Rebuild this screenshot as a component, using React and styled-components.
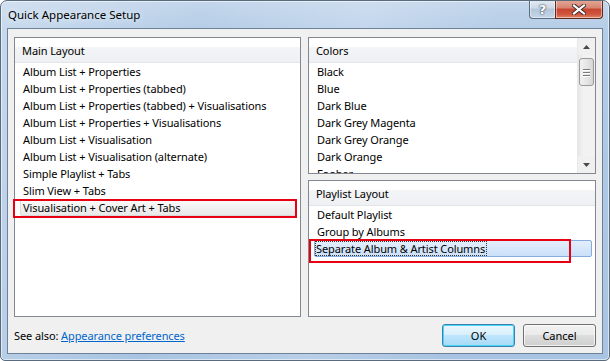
import React from 'react'
import styled, { createGlobalStyle } from 'styled-components'

const Global = createGlobalStyle`
  html, body { margin: 0; padding: 0; background: #fff; }
  body { width: 610px; height: 361px; overflow: hidden; font-family: "Noto Sans", "DejaVu Sans", sans-serif; font-size: 11px; letter-spacing: -0.1px; color: #000; }
`

const mainLayouts = [
  'Album List + Properties',
  'Album List + Properties (tabbed)',
  'Album List + Properties (tabbed) + Visualisations',
  'Album List + Properties + Visualisations',
  'Album List + Visualisation',
  'Album List + Visualisation (alternate)',
  'Simple Playlist + Tabs',
  'Slim View + Tabs',
  'Visualisation + Cover Art + Tabs',
]

const colours = ['Black', 'Blue', 'Dark Blue', 'Dark Grey Magenta', 'Dark Grey Orange', 'Dark Orange', 'Foobar']

const playlistLayouts = ['Default Playlist', 'Group by Albums', 'Separate Album & Artist Columns']

export default function App() {
  return (
    <>
      <Global />
      <Window>
        <TitleBar>
          <Title>Quick Appearance Setup</Title>
          <Captions>
            <HelpButton>?</HelpButton>
            <CloseButton>
              <svg width="14" height="11" viewBox="0 0 14 11">
                <path d="M2 1.5 L12 9.5 M12 1.5 L2 9.5" stroke="#3a2a28" strokeWidth="4" strokeLinecap="square" />
                <path d="M2 1.5 L12 9.5 M12 1.5 L2 9.5" stroke="#fff" strokeWidth="2.2" strokeLinecap="square" />
              </svg>
            </CloseButton>
          </Captions>
        </TitleBar>

        <Client>
          <Panels>
            <Panel>
              <Header>Main Layout</Header>
              <Items>
                {mainLayouts.map((t, i) => (
                  <Item key={t} selected={i === 8 ? 'inactive' : ''}>
                    {t}
                    {i === 8 && <Marker left={-8} top={-1} width={284} height={19} />}
                  </Item>
                ))}
              </Items>
            </Panel>

            <RightColumn>
              <Panel clip>
                <ScrollArea>
                  <ListBody>
                    <Header>Colors</Header>
                    <Items>
                      {colours.map(t => <Item key={t}>{t}</Item>)}
                    </Items>
                  </ListBody>
                  <ScrollBar>
                    <Arrow>
                      <svg width="7" height="4" viewBox="0 0 7 4"><path d="M0 4 L3.5 0 L7 4Z" fill="#4a4a4a" /></svg>
                    </Arrow>
                    <Track>
                      <Thumb>
                        <Grip /><Grip /><Grip />
                      </Thumb>
                    </Track>
                    <Arrow>
                      <svg width="7" height="4" viewBox="0 0 7 4"><path d="M0 0 L3.5 4 L7 0Z" fill="#4a4a4a" /></svg>
                    </Arrow>
                  </ScrollBar>
                </ScrollArea>
              </Panel>

              <Panel>
                <Header>Playlist Layout</Header>
                <Items>
                  {playlistLayouts.map((t, i) => (
                    <Item key={t} selected={i === 2 ? 'active' : ''}>
                      {i === 2 ? <Focus>{t}</Focus> : t}
                      {i === 2 && <Marker left={-6} top={-2} width={262} height={24} />}
                    </Item>
                  ))}
                </Items>
              </Panel>
            </RightColumn>
          </Panels>

          <Footer>
            <SeeAlso>
              See also: <Link href="#">Appearance preferences</Link>
            </SeeAlso>
            <Buttons>
              <Button primary>OK</Button>
              <Button>Cancel</Button>
            </Buttons>
          </Footer>
        </Client>
      </Window>
    </>
  )
}

const Window = styled.div`
  box-sizing: border-box;
  width: 610px;
  height: 361px;
  border: 1px solid #5a6b7e;
  border-radius: 7px 7px 5px 5px;
  background:
    linear-gradient(100deg, rgba(255,255,255,0.25) 0%, rgba(255,255,255,0) 30%, rgba(255,255,255,0.18) 55%, rgba(255,255,255,0) 75%),
    linear-gradient(180deg, #c3d6eb 0%, #b2cbe6 10%, #a9c4e2 100%);
  box-shadow: inset 0 0 0 1px rgba(255,255,255,0.55);
  display: flex;
  flex-direction: column;
  overflow: hidden;
`

const TitleBar = styled.div`
  height: 27px;
  display: flex;
  align-items: flex-start;
  justify-content: space-between;
  padding-left: 7px;
`

const Title = styled.div`
  margin-top: 6px;
  font-size: 11.5px;
  letter-spacing: 0;
  color: #000;
  text-shadow: 0 0 6px rgba(255,255,255,0.9);
`

const Captions = styled.div`
  display: flex;
  margin-right: 6px;
  margin-top: -1px;
`

const CaptionBase = styled.div`
  height: 19px;
  box-sizing: border-box;
  border: 1px solid #5c6d80;
  border-top: none;
  display: flex;
  align-items: center;
  justify-content: center;
  box-shadow: inset 0 0 0 1px rgba(255,255,255,0.45);
`

const HelpButton = styled(CaptionBase)`
  width: 26px;
  border-right: none;
  border-radius: 0 0 0 4px;
  background: linear-gradient(180deg, #e3ebf4 0%, #cdd9e7 45%, #b4c6da 50%, #c6d6e8 100%);
  font-family: "DejaVu Sans", sans-serif;
  font-weight: bold;
  font-size: 13px;
  color: #fff;
  text-shadow: 0 0 1px #2a3a4a, 0 0 2px #2a3a4a;
`

const CloseButton = styled(CaptionBase)`
  width: 48px;
  border-color: #5d2a22;
  border-radius: 0 0 4px 0;
  background: linear-gradient(180deg, #e6a898 0%, #d68370 45%, #c7442f 50%, #d1563f 80%, #e08a68 100%);
`

const Client = styled.div`
  flex: 1;
  margin: 0 6px 6px 6px;
  border: 1px solid #6d8199;
  background: #f0f0f0;
  padding: 8px 6px 6px 6px;
  display: flex;
  flex-direction: column;
`

const Panels = styled.div`
  display: grid;
  grid-template-columns: 287px 288px;
  column-gap: 7px;
  height: 280px;
`

const RightColumn = styled.div`
  display: grid;
  grid-template-rows: 137px 137px;
  row-gap: 6px;
`

const Panel = styled.div`
  box-sizing: border-box;
  border: 1px solid #828790;
  background: #fff;
  overflow: ${p => (p.clip ? 'hidden' : 'visible')};
`

const ScrollArea = styled.div`
  display: flex;
  height: 100%;
`

const ListBody = styled.div`
  flex: 1;
  overflow: hidden;
`

const Header = styled.div`
  height: 24px;
  line-height: 25px;
  padding-left: 7px;
  border-bottom: 1px solid #e3e5e8;
  background: linear-gradient(180deg, #ffffff 0%, #ffffff 35%, #f3f4f6 40%, #eef0f3 100%);
  white-space: nowrap;
`

const Items = styled.div`
  padding-top: 0;
`

const Item = styled.div`
  position: relative;
  box-sizing: border-box;
  height: 17px;
  line-height: 15px;
  margin: 0 3px 0 5px;
  padding-left: 2px;
  border: 1px solid transparent;
  border-radius: 2px;
  white-space: nowrap;
  ${p => p.selected === 'inactive' && `
    border-color: #d9d9d9;
    background: linear-gradient(180deg, #fafafa 0%, #e8e8e8 100%);
  `}
  ${p => p.selected === 'active' && `
    border-color: #84acdd;
    background: linear-gradient(180deg, #e3eefc 0%, #cbe0f9 100%);
  `}
`

const Focus = styled.span`
  display: inline-block;
  margin-left: -2px;
  padding: 0 2px 0 1px;
  outline: 1px dotted #333;
  outline-offset: -1px;
  height: 15px;
`

const Marker = styled.div`
  position: absolute;
  left: ${p => p.left}px;
  top: ${p => p.top}px;
  width: ${p => p.width}px;
  height: ${p => p.height}px;
  box-sizing: border-box;
  border: 2px solid #e60012;
  pointer-events: none;
`

const ScrollBar = styled.div`
  width: 17px;
  display: flex;
  flex-direction: column;
  background: #f0f0f0;
  border-left: 1px solid #e8e8e8;
`

const Arrow = styled.div`
  height: 17px;
  display: flex;
  align-items: center;
  justify-content: center;
`

const Track = styled.div`
  flex: 1;
  padding-top: 3px;
  background: linear-gradient(90deg, #e6e6e6 0%, #f2f2f2 30%, #f2f2f2 100%);
`

const Thumb = styled.div`
  box-sizing: border-box;
  height: 28px;
  margin: 0 1px;
  border: 1px solid #9a9a9a;
  border-radius: 3px;
  background: linear-gradient(90deg, #f1f1f1 0%, #e6e6e6 50%, #d6d6d6 100%);
  display: flex;
  flex-direction: column;
  justify-content: center;
  align-items: center;
  gap: 2px;
`

const Grip = styled.div`
  width: 7px;
  height: 1px;
  background: #7a7a7a;
  box-shadow: 0 1px 0 #fff;
`

const Footer = styled.div`
  margin-top: 7px;
  height: 23px;
  display: flex;
  align-items: center;
  justify-content: space-between;
`

const SeeAlso = styled.div`
  white-space: nowrap;
`

const Link = styled.a`
  color: #0066cc;
  text-decoration: underline;
`

const Buttons = styled.div`
  display: flex;
  gap: 8px;
`

const Button = styled.button`
  box-sizing: border-box;
  width: 73px;
  height: 23px;
  padding: 0;
  font-family: inherit;
  font-size: 11px;
  color: #000;
  border-radius: 3px;
  border: 1px solid ${p => (p.primary ? '#3c7fb1' : '#707070')};
  background: ${p =>
    p.primary
      ? 'linear-gradient(180deg, #eaf6fd 0%, #d9f0fc 45%, #bee6fd 50%, #a7d9f5 100%)'
      : 'linear-gradient(180deg, #f2f2f2 0%, #ebebeb 45%, #dddddd 50%, #cfcfcf 100%)'};
  box-shadow: inset 0 0 0 1px ${p => (p.primary ? '#48d7f7' : 'rgba(255,255,255,0.7)')};
`
